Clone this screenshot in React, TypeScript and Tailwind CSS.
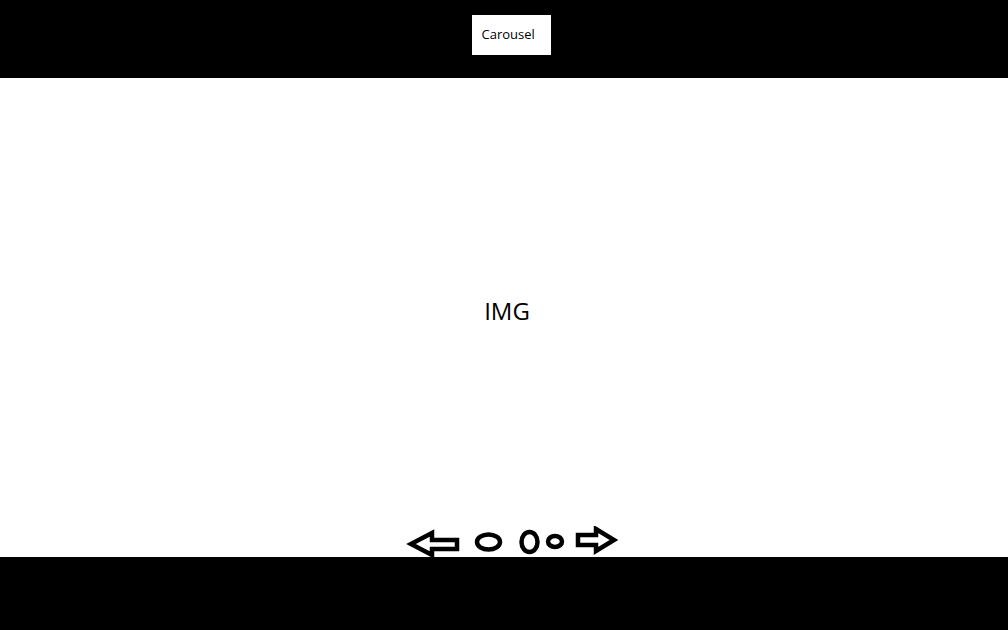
import React from "react";

export default function App() {
  return (
    <div className="w-[1008px] h-[630px] flex flex-col bg-white" style={{ fontFamily: '"Open Sans", "Noto Sans", sans-serif' }}>
      <header className="h-[78px] bg-black flex justify-center pt-[15px] pl-[14px]">
        <div className="w-[79px] h-[40px] bg-white flex items-center pl-[10px] text-[13px] text-black">
          Carousel
        </div>
      </header>
      <main className="flex-1 flex flex-col">
        <div className="flex-1 flex items-center justify-center pt-[17px] pl-[6px] text-[24px] text-black">IMG</div>
        <div className="h-[31px] flex pl-[405px] overflow-hidden">
          <svg width="215" height="32" viewBox="0 0 215 32" fill="none" stroke="black" strokeWidth="4.5" strokeLinejoin="miter">
            <polygon points="6,18 27,7 27,14 52,14 52,23 27,23 27,29" />
            <ellipse cx="83.5" cy="16" rx="11.5" ry="7.5" />
            <ellipse cx="124.5" cy="16" rx="8" ry="10" />
            <ellipse cx="150" cy="15.5" rx="7" ry="5.5" />
            <polygon points="173,9 191,9 191,3 209,14 191,25 191,19 173,19" />
          </svg>
        </div>
      </main>
      <footer className="h-[73px] bg-black" />
    </div>
  );
}
